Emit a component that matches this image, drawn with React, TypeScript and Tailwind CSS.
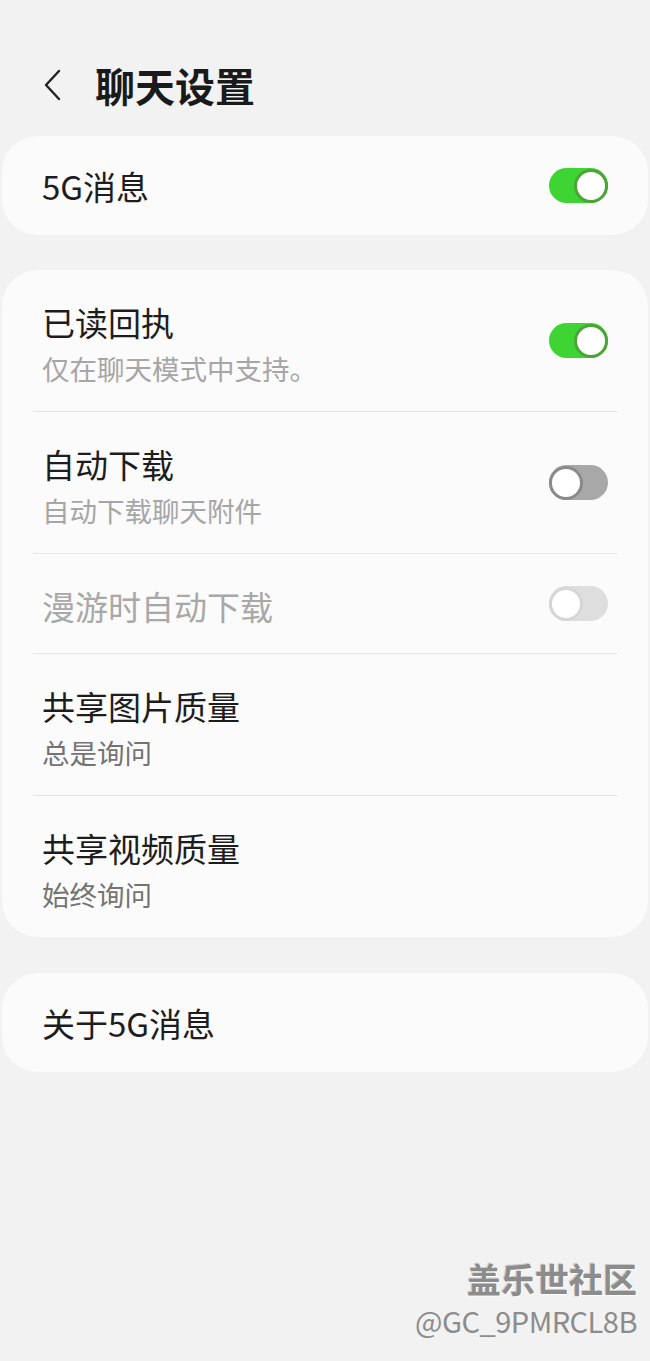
import React from "react";

type ToggleState = "on" | "off" | "disabled";

const Toggle: React.FC<{ state: ToggleState }> = ({ state }) => {
  const track =
    state === "on" ? "bg-[#3ed534]" : state === "off" ? "bg-[#a8a8a8]" : "bg-[#dedede]";
  const knob =
    state === "on"
      ? "border-[#4aa537] ml-auto"
      : state === "off"
        ? "border-[#8a8a8a]"
        : "border-[#d6d6d6]";
  return (
    <div className={`w-[59px] h-[35px] rounded-full flex items-center shrink-0 ${track}`}>
      <div className={`w-[34px] h-[34px] rounded-full bg-white border-[3px] ${knob}`} />
    </div>
  );
};

const Divider = () => <div className="h-px bg-[#e6e6e6] mx-[31px]" />;

type Row = {
  title: string;
  sub?: string;
  subTone?: "light" | "dark";
  toggle?: ToggleState;
  disabled?: boolean;
};

const rows: Row[] = [
  { title: "已读回执", sub: "仅在聊天模式中支持。", subTone: "light", toggle: "on" },
  { title: "自动下载", sub: "自动下载聊天附件", subTone: "light", toggle: "off" },
  { title: "漫游时自动下载", toggle: "disabled", disabled: true },
  { title: "共享图片质量", sub: "总是询问", subTone: "dark" },
  { title: "共享视频质量", sub: "始终询问", subTone: "dark" },
];

const SettingRow: React.FC<{ row: Row }> = ({ row }) => (
  <div className="flex items-center justify-between pl-[40px] pr-[40px]">
    {row.sub ? (
      <div className="pt-[32px] pb-[26px]">
        <div className="text-[33px] leading-[40px] text-[#1d1d1d]">{row.title}</div>
        <div
          className={`mt-[10px] text-[27.5px] leading-[33px] ${
            row.subTone === "dark" ? "text-[#737373]" : "text-[#a6a6a6]"
          }`}
        >
          {row.sub}
        </div>
      </div>
    ) : (
      <div className="h-[99px] flex items-center pt-[4px]">
        <div
          className={`text-[33px] leading-[40px] ${
            row.disabled ? "text-[#a8a8a8]" : "text-[#1d1d1d]"
          }`}
        >
          {row.title}
        </div>
      </div>
    )}
    {row.toggle && <Toggle state={row.toggle} />}
  </div>
);

export default function App() {
  return (
    <div className="relative min-h-[1361px] bg-[#f2f2f2] font-['Noto_Sans_CJK_SC','Noto_Sans',sans-serif]">
      {/* Header */}
      <div className="h-[136px] pt-[34px] flex items-center">
        <svg
          className="ml-[43px] w-[20px] h-[32px]"
          viewBox="0 0 20 32"
          fill="none"
          stroke="#222"
          strokeWidth="2.4"
          strokeLinecap="round"
          strokeLinejoin="round"
        >
          <path d="M16 2 L3 16 L16 30" />
        </svg>
        <h1 className="ml-[32px] text-[40px] leading-[48px] font-bold text-[#1a1a1a]">聊天设置</h1>
      </div>

      {/* 5G message */}
      <div className="mx-[2px] h-[99px] rounded-[36px] bg-[#fbfbfb] flex items-center justify-between pl-[40px] pr-[40px]">
        <span className="text-[33px] leading-[40px] text-[#1d1d1d]">5G消息</span>
        <Toggle state="on" />
      </div>

      {/* Options */}
      <div className="mx-[2px] mt-[35px] rounded-[36px] bg-[#fbfbfb]">
        {rows.map((r, i) => (
          <React.Fragment key={r.title}>
            {i > 0 && <Divider />}
            <SettingRow row={r} />
          </React.Fragment>
        ))}
      </div>

      {/* About */}
      <div className="mx-[2px] mt-[36px] h-[99px] rounded-[36px] bg-[#fbfbfb] flex items-center pl-[40px]">
        <span className="text-[33px] leading-[40px] text-[#1d1d1d]">关于5G消息</span>
      </div>

      {/* Watermark */}
      <div className="absolute right-[13px] top-[1260px] flex flex-col items-end gap-[6px] text-[#8c8c8c]">
        <div className="text-[34px] leading-[38px] font-bold [text-shadow:1px_1px_0_#ffffff,-1px_-1px_0_#c8c8c8]">
          盖乐世社区
        </div>
        <div className="text-[29px] leading-[32px] tracking-[-0.5px]">@GC_9PMRCL8B</div>
      </div>
    </div>
  );
}
